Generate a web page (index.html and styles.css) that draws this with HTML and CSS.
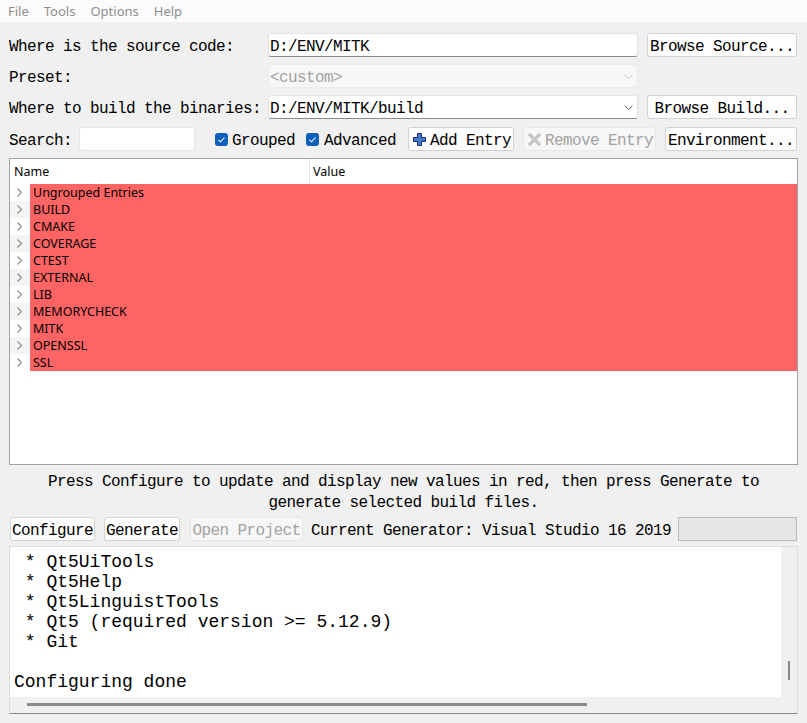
FILE: index.html
```html
<!DOCTYPE html>
<html>
<head>
<meta charset="utf-8">
<title>CMake</title>
<link rel="stylesheet" href="styles.css">
</head>
<body>
<div class="window">
  <div class="menubar">
    <span>File</span><span>Tools</span><span>Options</span><span>Help</span>
  </div>
  <div class="content">
    <div class="paths">
      <div class="label">Where is the source code:</div>
      <div class="field">D:/ENV/MITK</div>
      <button class="btn">Browse Source...</button>

      <div class="label">Preset:</div>
      <div class="field combo disabled"><span>&lt;custom&gt;</span><svg class="chev" width="9" height="5" viewBox="0 0 9 5"><polyline points="0.5,0.5 4.5,4.5 8.5,0.5" fill="none" stroke="#c8c8c8" stroke-width="1"/></svg></div>
      <div></div>

      <div class="label">Where to build the binaries:</div>
      <div class="field combo"><span>D:/ENV/MITK/build</span><svg class="chev" width="9" height="5" viewBox="0 0 9 5"><polyline points="0.5,0.5 4.5,4.5 8.5,0.5" fill="none" stroke="#606060" stroke-width="1"/></svg></div>
      <button class="btn">Browse Build...</button>
    </div>

    <div class="toolbar">
      <span class="label">Search:</span>
      <div class="search"></div>
      <label class="checkopt opt-grouped"><span class="check"><svg width="13" height="13" viewBox="0 0 13 13"><polyline points="3.5,6.8 5.5,8.8 9.5,4.5" fill="none" stroke="#fff" stroke-width="1.1"/></svg></span>Grouped</label>
      <label class="checkopt opt-advanced"><span class="check"><svg width="13" height="13" viewBox="0 0 13 13"><polyline points="3.5,6.8 5.5,8.8 9.5,4.5" fill="none" stroke="#fff" stroke-width="1.1"/></svg></span>Advanced</label>
      <button class="btn icon-btn add-btn"><svg width="13" height="13" viewBox="0 0 13 13"><path d="M4.5 0.5h4v4h4v4h-4v4h-4v-4h-4v-4h4z" fill="#4a78cc" stroke="#132f6a" stroke-width="1"/></svg>Add Entry</button>
      <button class="btn icon-btn disabled remove-btn"><svg width="13" height="13" viewBox="0 0 13 13"><path d="M2 2L11 11M11 2L2 11" stroke="#c6c6c6" stroke-width="3.2" stroke-linecap="square"/></svg>Remove Entry</button>
      <button class="btn env-btn">Environment...</button>
    </div>

    <div class="tree">
      <div class="tree-head">
        <div class="col-name">Name</div>
        <div class="col-value">Value</div>
      </div>
      <div class="rows">
        <div class="row"><span class="arrow"><svg width="5" height="9" viewBox="0 0 5 9"><polyline points="0.5,0.5 4.5,4.5 0.5,8.5" fill="none" stroke="#8a8a8a" stroke-width="1.1"/></svg></span><span class="cell">Ungrouped Entries</span></div>
        <div class="row"><span class="arrow"><svg width="5" height="9" viewBox="0 0 5 9"><polyline points="0.5,0.5 4.5,4.5 0.5,8.5" fill="none" stroke="#8a8a8a" stroke-width="1.1"/></svg></span><span class="cell">BUILD</span></div>
        <div class="row"><span class="arrow"><svg width="5" height="9" viewBox="0 0 5 9"><polyline points="0.5,0.5 4.5,4.5 0.5,8.5" fill="none" stroke="#8a8a8a" stroke-width="1.1"/></svg></span><span class="cell">CMAKE</span></div>
        <div class="row"><span class="arrow"><svg width="5" height="9" viewBox="0 0 5 9"><polyline points="0.5,0.5 4.5,4.5 0.5,8.5" fill="none" stroke="#8a8a8a" stroke-width="1.1"/></svg></span><span class="cell">COVERAGE</span></div>
        <div class="row"><span class="arrow"><svg width="5" height="9" viewBox="0 0 5 9"><polyline points="0.5,0.5 4.5,4.5 0.5,8.5" fill="none" stroke="#8a8a8a" stroke-width="1.1"/></svg></span><span class="cell">CTEST</span></div>
        <div class="row"><span class="arrow"><svg width="5" height="9" viewBox="0 0 5 9"><polyline points="0.5,0.5 4.5,4.5 0.5,8.5" fill="none" stroke="#8a8a8a" stroke-width="1.1"/></svg></span><span class="cell">EXTERNAL</span></div>
        <div class="row"><span class="arrow"><svg width="5" height="9" viewBox="0 0 5 9"><polyline points="0.5,0.5 4.5,4.5 0.5,8.5" fill="none" stroke="#8a8a8a" stroke-width="1.1"/></svg></span><span class="cell">LIB</span></div>
        <div class="row"><span class="arrow"><svg width="5" height="9" viewBox="0 0 5 9"><polyline points="0.5,0.5 4.5,4.5 0.5,8.5" fill="none" stroke="#8a8a8a" stroke-width="1.1"/></svg></span><span class="cell">MEMORYCHECK</span></div>
        <div class="row"><span class="arrow"><svg width="5" height="9" viewBox="0 0 5 9"><polyline points="0.5,0.5 4.5,4.5 0.5,8.5" fill="none" stroke="#8a8a8a" stroke-width="1.1"/></svg></span><span class="cell">MITK</span></div>
        <div class="row"><span class="arrow"><svg width="5" height="9" viewBox="0 0 5 9"><polyline points="0.5,0.5 4.5,4.5 0.5,8.5" fill="none" stroke="#8a8a8a" stroke-width="1.1"/></svg></span><span class="cell">OPENSSL</span></div>
        <div class="row"><span class="arrow"><svg width="5" height="9" viewBox="0 0 5 9"><polyline points="0.5,0.5 4.5,4.5 0.5,8.5" fill="none" stroke="#8a8a8a" stroke-width="1.1"/></svg></span><span class="cell">SSL</span></div>
      </div>
    </div>

    <p class="message">Press Configure to update and display new values in red, then press Generate to generate selected build files.</p>

    <div class="actions">
      <button class="btn btn-configure">Configure</button>
      <button class="btn btn-generate">Generate</button>
      <button class="btn disabled btn-open">Open Project</button>
      <span class="gen-label">Current Generator: Visual Studio 16 2019</span>
      <div class="progress"></div>
    </div>

    <div class="output">
      <div class="log"><pre> * Qt5UiTools
 * Qt5Help
 * Qt5LinguistTools
 * Qt5 (required version &gt;= 5.12.9)
 * Git

Configuring done</pre></div>
      <div class="vscroll"><div class="vthumb"></div></div>
      <div class="hscroll"><div class="hthumb"></div></div>
    </div>
  </div>
</div>
</body>
</html>
```

FILE: styles.css
```css
* { box-sizing: border-box; }
html, body { margin: 0; padding: 0; }
body {
  width: 807px;
  height: 723px;
  overflow: hidden;
  background: #f0f0f0;
  font-family: "Liberation Mono", monospace;
  font-size: 16px;
  letter-spacing: -0.6px;
  color: #000;
}
.window { width: 807px; height: 723px; }

.menubar {
  height: 22px;
  background: #fbfbfb;
  display: flex;
  align-items: center;
  gap: 15px;
  padding-left: 8px;
  font-family: "Noto Sans", sans-serif;
  font-size: 13px;
  letter-spacing: 0;
  color: #8f8f8f;
}

.content { padding: 11px 9px 0 9px; }

.paths {
  display: grid;
  grid-template-columns: 250px 370px 150px;
  grid-auto-rows: 24px;
  column-gap: 9px;
  row-gap: 7px;
}
.label {
  display: flex;
  align-items: center;
  white-space: nowrap;
  height: 24px;
  padding-top: 4px;
}

.field {
  background: #fff;
  border: 1px solid #e4e4e4;
  border-bottom-color: #8a8a8a;
  border-radius: 3px;
  display: flex;
  align-items: center;
  padding: 3px 0 0 1px;
  white-space: nowrap;
}
.field.disabled {
  background: #f7f7f7;
  border-color: #ebebeb;
  color: #a3a3a3;
}
.combo { justify-content: space-between; padding-right: 4px; }
.chev { margin-top: -3px; }

.btn {
  font: inherit;
  letter-spacing: inherit;
  color: #000;
  background: #fdfdfd;
  border: 1px solid #d2d2d2;
  border-radius: 3px;
  height: 24px;
  padding: 3px 0 0;
  display: flex;
  align-items: center;
  justify-content: center;
  white-space: nowrap;
}
.btn svg { margin-top: -3px; flex: none; }
.btn.disabled { background: #f7f7f7; border-color: #e8e8e8; color: #a3a3a3; }

.toolbar {
  display: flex;
  align-items: center;
  height: 24px;
  margin-top: 8px;
}
.search {
  width: 116px;
  height: 24px;
  margin-left: 7px;
  background: #fff;
  border: 1px solid #e6e6e6;
  border-radius: 3px;
}
.checkopt {
  display: flex;
  align-items: center;
  gap: 4px;
  white-space: nowrap;
  height: 24px;
  padding-top: 3px;
}
.checkopt .check { margin-top: -3px; }
.opt-grouped { margin-left: 20px; }
.opt-advanced { margin-left: 11px; gap: 5px; }
.check {
  width: 13px;
  height: 13px;
  border-radius: 3px;
  background: #0f5fbd;
  display: flex;
  flex: none;
}
.icon-btn { justify-content: flex-start; gap: 4px; }
.add-btn { margin-left: 12px; width: 106px; padding-left: 4px; }
.remove-btn { margin-left: 9px; width: 133px; padding-left: 4px; }
.env-btn { margin-left: 9px; width: 132px; }

.tree {
  margin-top: 7px;
  height: 307px;
  border: 1px solid #a0a0a0;
  background: #fff;
  font-family: "Noto Sans", sans-serif;
  font-size: 12.5px;
  letter-spacing: 0;
  color: #000;
}
.tree-head { height: 25px; display: flex; }
.col-name {
  width: 300px;
  border-right: 1px solid #e5e5e5;
  padding-left: 4px;
  display: flex;
  align-items: center;
}
.col-value { padding-left: 3px; display: flex; align-items: center; }
.row { display: flex; height: 17px; }
.arrow { width: 20px; padding-left: 7px; display: flex; align-items: center; }
.row:nth-child(even) .arrow { background: #f4f4f4; }
.cell { flex: 1; background: #ff6464; padding-left: 3px; line-height: 17px; }

.message {
  margin: 5px 0 0;
  padding-top: 2px;
  height: 42px;
  text-align: center;
  line-height: 21px;
}

.actions {
  display: flex;
  align-items: center;
  height: 24px;
  margin-top: 5px;
  padding-left: 1px;
}
.btn-configure { width: 85px; }
.btn-generate { width: 76px; margin-left: 9px; }
.btn-open { width: 113px; margin-left: 10px; }
.gen-label { margin-left: 8px; white-space: nowrap; padding-top: 4px; }
.progress {
  width: 119px;
  height: 24px;
  margin-left: auto;
  margin-right: 1px;
  background: #e6e6e6;
  border: 1px solid #bcbcbc;
}

.output {
  margin-top: 5px;
  height: 168px;
  border: 1px solid #dcdcdc;
  border-bottom-color: #8c8c8c;
  display: grid;
  grid-template-columns: 1fr 16px;
  grid-template-rows: 150px 16px;
}
.log { background: #fff; overflow: hidden; padding: 5px 0 0 4px; }
.log pre {
  margin: 0;
  font-family: "Liberation Mono", monospace;
  font-size: 18px;
  line-height: 20px;
  letter-spacing: 0;
  color: #000;
}
.vscroll { background: #f0f0f0; }
.vthumb { width: 2px; height: 19px; margin: 114px 0 0 7px; background: #8a8a8a; }
.hscroll { grid-column: 1 / 3; background: #f0f0f0; }
.hthumb { width: 560px; height: 3px; margin: 6px 0 0 17px; background: #8a8a8a; }
```
